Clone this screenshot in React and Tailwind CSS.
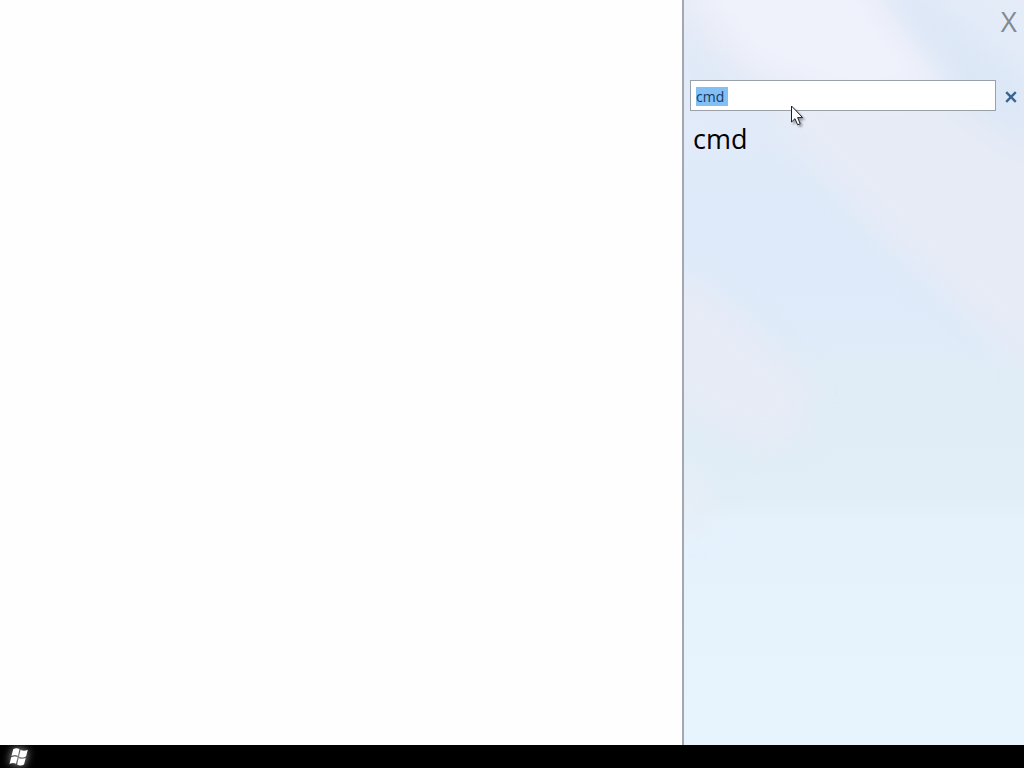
import { useEffect, useRef, useState } from "react";

function PanelBackdrop() {
  return (
    <svg
      aria-hidden="true"
      className="absolute inset-0 h-full w-full"
      viewBox="0 0 340 745"
      preserveAspectRatio="none"
    >
      <defs>
        <linearGradient id="sky" x1="0" y1="0" x2="0" y2="1">
          <stop offset="0" stopColor="#e5ecf8" />
          <stop offset="0.28" stopColor="#deeaf9" />
          <stop offset="0.45" stopColor="#dfebf9" />
          <stop offset="0.5" stopColor="#e0edf6" />
          <stop offset="0.67" stopColor="#e1eef7" />
          <stop offset="0.7" stopColor="#e5f2fc" />
          <stop offset="1" stopColor="#e7f3fd" />
        </linearGradient>
        <filter
          id="soft"
          x="-20%"
          y="-20%"
          width="140%"
          height="140%"
          colorInterpolationFilters="sRGB"
        >
          <feGaussianBlur stdDeviation="14" />
        </filter>
      </defs>
      <rect width="340" height="745" fill="url(#sky)" />
      <g filter="url(#soft)">
        <path d="M-20 -20H190L380 120V400L190 230L80 110L-20 10Z" fill="#e6ebf6" />
        <path d="M0 -20H180L265 85L170 105L60 65Z" fill="#eff1fb" />
        <path d="M190 -10H240L350 85V150L280 105Z" fill="#dce7f6" />
        <path d="M-20 20L80 95L110 130L-10 80Z" fill="#dfe9f7" />
        <path d="M-20 265L30 290L130 385L110 445H60L-20 400Z" fill="#e6ebf6" />
        <path d="M-20 450L20 480L30 530H-20Z" fill="#e6edf7" />
      </g>
    </svg>
  );
}

function Cursor() {
  return (
    <svg
      aria-hidden="true"
      className="pointer-events-none absolute top-[105px] left-[106px] h-6 w-4 drop-shadow-[2px_2px_1px_rgba(0,0,0,0.35)]"
      viewBox="0 0 16 24"
    >
      <path
        d="M1.5 1V17L5 13.7L7.6 19.8L10.2 18.7L7.6 12.6H12.6Z"
        fill="#fff"
        stroke="#1c1f2b"
        strokeWidth="1"
      />
    </svg>
  );
}

function StartButton() {
  return (
    <button type="button" aria-label="Start" className="flex h-[23px] w-[38px] items-center justify-center">
      <svg
        className="h-[22px] w-6 drop-shadow-[0_0_4px_rgba(255,255,255,0.8)]"
        viewBox="0 0 24 22"
        fill="#fff"
      >
        <path d="M6.2 3.2C8.5 1.9 10.7 2 12.5 3.2L10.9 9.8C9 8.8 6.9 8.8 4.5 10Z" />
        <path d="M13.6 3.8C15.7 5 18.1 4.9 20.8 3.8L19 10.6C16.5 11.8 14.1 11.8 12 10.5Z" />
        <path d="M4.2 11.3C6.6 10.1 8.7 10.1 10.6 11.2L9 17.8C7.1 16.8 4.9 16.8 2.5 18Z" />
        <path d="M11.7 11.9C13.8 13.1 16.2 13.1 18.7 12L17 18.6C14.5 19.8 12.1 19.8 10.1 18.5Z" />
      </svg>
    </button>
  );
}

export default function App() {
  const [query, setQuery] = useState("cmd ");
  const [open, setOpen] = useState(true);
  const searchRef = useRef(null);

  useEffect(() => {
    searchRef.current.focus();
    searchRef.current.select();
  }, []);

  return (
    <div className="flex h-screen flex-col bg-[#fefefe] font-['Open_Sans','Noto_Sans',sans-serif]">
      <main className="flex min-h-0 flex-1 justify-end">
        {open && (
          <aside className="relative w-[342px] overflow-hidden border-l-2 border-[#a3a8b0]">
            <PanelBackdrop />
            <div className="relative flex flex-col">
              <button
                type="button"
                aria-label="Close"
                className="mr-[7px] h-[42px] self-end text-[28px] leading-[42px] font-normal text-[#858991]"
                onClick={() => setOpen(false)}
              >
                X
              </button>
              <div className="mt-[38px] flex items-center pl-1.5">
                <input
                  ref={searchRef}
                  type="text"
                  aria-label="Search"
                  className="h-[31px] min-w-0 flex-1 border border-[#9a9fa8] bg-white px-[5px] pt-px text-sm leading-5 text-[#17395f] outline-none selection:bg-[#82bff5] selection:text-[#17395f]"
                  value={query}
                  onChange={(event) => setQuery(event.target.value)}
                />
                <button
                  type="button"
                  aria-label="Clear search"
                  className="flex h-7 w-7 items-center justify-center pt-0.5 pl-0.5"
                  onClick={() => setQuery("")}
                >
                  <svg className="h-3 w-3" viewBox="0 0 12 12">
                    <path d="M1.2 1.2L10.8 10.8M10.8 1.2L1.2 10.8" stroke="#3a6592" strokeWidth="2.4" />
                  </svg>
                </button>
              </div>
              <p className="mt-2 pl-[9px] text-[27px] leading-10 text-black">{query.trim()}</p>
            </div>
            <Cursor />
          </aside>
        )}
      </main>
      <footer className="flex h-[23px] shrink-0 bg-black">
        <StartButton />
      </footer>
    </div>
  );
}
